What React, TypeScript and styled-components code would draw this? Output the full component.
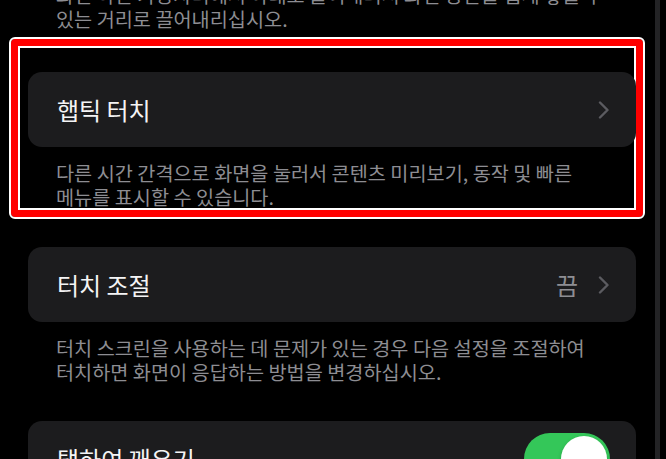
import React from 'react'
import styled, { createGlobalStyle } from 'styled-components'

const GlobalStyle = createGlobalStyle`
  html, body {
    margin: 0;
    padding: 0;
    background: #000;
  }
  body {
    font-family: 'Noto Sans CJK KR', 'Noto Sans', sans-serif;
    -webkit-font-smoothing: antialiased;
  }
`

type RowProps = {
  title: string
  value?: string
  chevron?: boolean
  toggle?: boolean
}

const Chevron = () => (
  <ChevronSvg viewBox="0 0 12 18" aria-hidden>
    <path d="M2 1.5 L9.5 9 L2 16.5" fill="none" stroke="currentColor" strokeWidth="2.4" strokeLinecap="round" strokeLinejoin="round" />
  </ChevronSvg>
)

const SettingRow: React.FC<RowProps> = ({ title, value, chevron, toggle }) => (
  <Card>
    <Title>{title}</Title>
    <Trailing>
      {value && <Value>{value}</Value>}
      {chevron && <Chevron />}
      {toggle && (
        <Switch>
          <Thumb />
        </Switch>
      )}
    </Trailing>
  </Card>
)

const App = () => {
  return (
    <Screen>
      <GlobalStyle />
      <Scroller>
        <Footer $clipped>
          화면 하단 가장자리에서 아래로 쓸어내려서 화면 상단을 쉽게 닿을 수
          <br />
          있는 거리로 끌어내리십시오.
        </Footer>

        <Highlight>
          <SettingRow title="햅틱 터치" chevron />
          <Footer>
            다른 시간 간격으로 화면을 눌러서 콘텐츠 미리보기, 동작 및 빠른
            <br />
            메뉴를 표시할 수 있습니다.
          </Footer>
        </Highlight>

        <Group>
          <SettingRow title="터치 조절" value="끔" chevron />
          <Footer>
            터치 스크린을 사용하는 데 문제가 있는 경우 다음 설정을 조절하여
            <br />
            터치하면 화면이 응답하는 방법을 변경하십시오.
          </Footer>
        </Group>

        <Group>
          <SettingRow title="탭하여 깨우기" toggle />
        </Group>
      </Scroller>
      <EdgeBar />
    </Screen>
  )
}

const Screen = styled.div`
  display: flex;
  width: 666px;
  height: 459px;
  overflow: hidden;
  background: #000;
`

const Scroller = styled.div`
  display: flex;
  flex-direction: column;
  width: 608px;
  padding-left: 28px;
  flex-shrink: 0;
`

const EdgeBar = styled.div`
  width: 5px;
  margin-left: 19px;
  background: #232325;
  flex-shrink: 0;
`

const Highlight = styled.div`
  margin: 9px -7px -8px -17px;
  padding: 26px 0 2px 10px;
  border: 7px solid #ff0000;
  border-radius: 4px;
  outline: 2px solid #fff;
  box-shadow: inset 0 0 0 2px #fff;
`

const Group = styled.div`
  margin-top: 38px;
  display: flex;
  flex-direction: column;
`

const Card = styled.div`
  display: flex;
  align-items: center;
  justify-content: space-between;
  height: 75px;
  padding: 0 26px 0 29px;
  background: #1c1c1e;
  border-radius: 14px;
`

const Title = styled.span`
  font-size: 24px;
  color: #f4f4f5;
`

const Trailing = styled.div`
  display: flex;
  align-items: center;
  gap: 20px;
`

const Value = styled.span`
  font-size: 24px;
  color: #8e8e93;
`

const ChevronSvg = styled.svg`
  width: 12px;
  height: 18px;
  color: #5b5b60;
`

const Switch = styled.div`
  position: relative;
  width: 86px;
  height: 52px;
  border-radius: 26px;
  background: #34c759;
`

const Thumb = styled.div`
  position: absolute;
  top: 3px;
  right: 3px;
  width: 46px;
  height: 46px;
  border-radius: 50%;
  background: #fff;
  box-shadow: 0 2px 4px rgba(0, 0, 0, 0.2);
`

const Footer = styled.p<{ $clipped?: boolean }>`
  margin: ${(p) => (p.$clipped ? '-17px 0 0' : '14px 0 0')};
  padding-left: 28px;
  font-size: 19.7px;
  line-height: 23.5px;
  color: #8d8d92;
`

export default App
